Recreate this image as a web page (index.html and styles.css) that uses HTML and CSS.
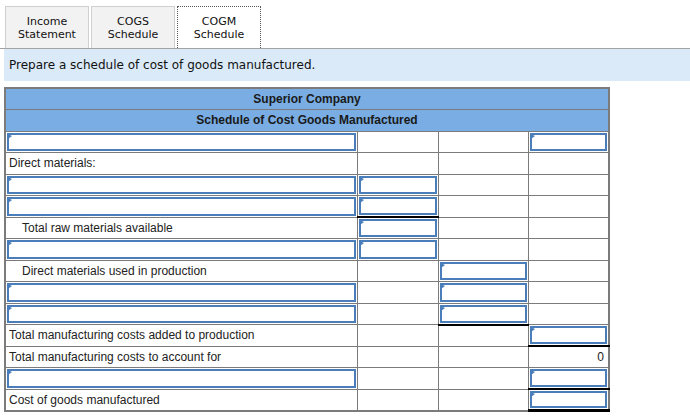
FILE: index.html
```html
<!DOCTYPE html>
<html>
<head>
<meta charset="utf-8">
<link rel="stylesheet" href="styles.css">
</head>
<body>
<div class="page">
  <div class="tabs">
    <div class="tab">Income<br>Statement</div>
    <div class="tab">COGS<br>Schedule</div>
    <div class="tab active">COGM<br>Schedule</div>
  </div>
  <div class="prompt">Prepare a schedule of cost of goods manufactured.</div>
  <table class="sched">
    <colgroup>
      <col class="c1"><col class="c2"><col class="c3"><col class="c4">
    </colgroup>
    <tr class="hd"><th colspan="4">Superior Company</th></tr>
    <tr class="hd"><th colspan="4">Schedule of Cost Goods Manufactured</th></tr>
    <tr><td class="in"></td><td></td><td></td><td class="in"></td></tr>
    <tr><td class="lbl">Direct materials:</td><td></td><td></td><td></td></tr>
    <tr><td class="in"></td><td class="in"></td><td></td><td></td></tr>
    <tr><td class="in"></td><td class="in ul"></td><td></td><td></td></tr>
    <tr><td class="lbl ind">Total raw materials available</td><td class="in"></td><td></td><td></td></tr>
    <tr><td class="in"></td><td class="in"></td><td></td><td></td></tr>
    <tr><td class="lbl ind">Direct materials used in production</td><td></td><td class="in"></td><td></td></tr>
    <tr><td class="in"></td><td></td><td class="in"></td><td></td></tr>
    <tr><td class="in"></td><td></td><td class="in ul"></td><td></td></tr>
    <tr><td class="lbl">Total manufacturing costs added to production</td><td></td><td></td><td class="in ul"></td></tr>
    <tr><td class="lbl">Total manufacturing costs to account for</td><td></td><td></td><td class="num">0</td></tr>
    <tr><td class="in"></td><td></td><td></td><td class="in ul"></td></tr>
    <tr><td class="lbl">Cost of goods manufactured</td><td></td><td></td><td class="in dbl"></td></tr>
  </table>
</div>
</body>
</html>
```
FILE: styles.css
```css
html, body {
  margin: 0;
  padding: 0;
  background: #fff;
}

.page {
  padding-left: 4px;
}

.tabs {
  display: flex;
  gap: 2px;
  padding: 6px 0 0 1px;
  border-bottom: 1px solid #a3a3a3;
  margin-left: -4px;
  padding-left: 5px;
}

.tab {
  width: 84px;
  height: 42px;
  box-sizing: border-box;
  border: 1px solid #cfcfcf;
  border-bottom: none;
  background: #f2f2f2;
  font-family: "DejaVu Sans", Verdana, sans-serif;
  font-size: 11px;
  line-height: 13px;
  color: #111;
  display: flex;
  align-items: center;
  justify-content: center;
  text-align: center;
}

.tab.active {
  background: #fff;
  border: 1px dotted #555;
  border-bottom: none;
}

.prompt {
  height: 32px;
  line-height: 32px;
  background: #dbeaf8;
  padding-left: 5px;
  font-family: "DejaVu Sans", Verdana, sans-serif;
  font-size: 12px;
  color: #111;
}

.sched {
  margin-top: 6px;
  width: 605px;
  table-layout: fixed;
  border-collapse: collapse;
  border: 2px solid #7b7b7b;
  font-family: "Liberation Sans", Arial, sans-serif;
  font-size: 12px;
  color: #222;
}

.c1 { width: 352px; }
.c2 { width: 81px; }
.c3 { width: 90px; }
.c4 { width: 81px; }

.sched tr {
  height: 21.5px;
}

.sched th {
  background: #79ade3;
  border: 1px solid #7b7b7b;
  font-weight: bold;
  text-align: center;
  color: #1a1a1a;
  padding: 0;
}

.sched td {
  border: 1px solid #7b7b7b;
  padding: 0;
  position: relative;
}

.sched td.lbl {
  padding-left: 3px;
}

.sched td.ind {
  padding-left: 16px;
}

.sched td.num {
  text-align: right;
  padding-right: 4px;
}

.sched td.in {
  box-shadow: inset 0 0 0 1px #fff, inset 0 0 0 3px #4a7ebb;
}

.sched td.in::before {
  content: "";
  position: absolute;
  left: 2px;
  top: 2px;
  border-left: 4px solid #4a7ebb;
  border-top: 2px solid transparent;
  border-bottom: 3px solid transparent;
}

.sched td.ul {
  border-bottom: 2px solid #000;
}

.sched td.dbl {
  border-bottom: 3px solid #000;
}
```
